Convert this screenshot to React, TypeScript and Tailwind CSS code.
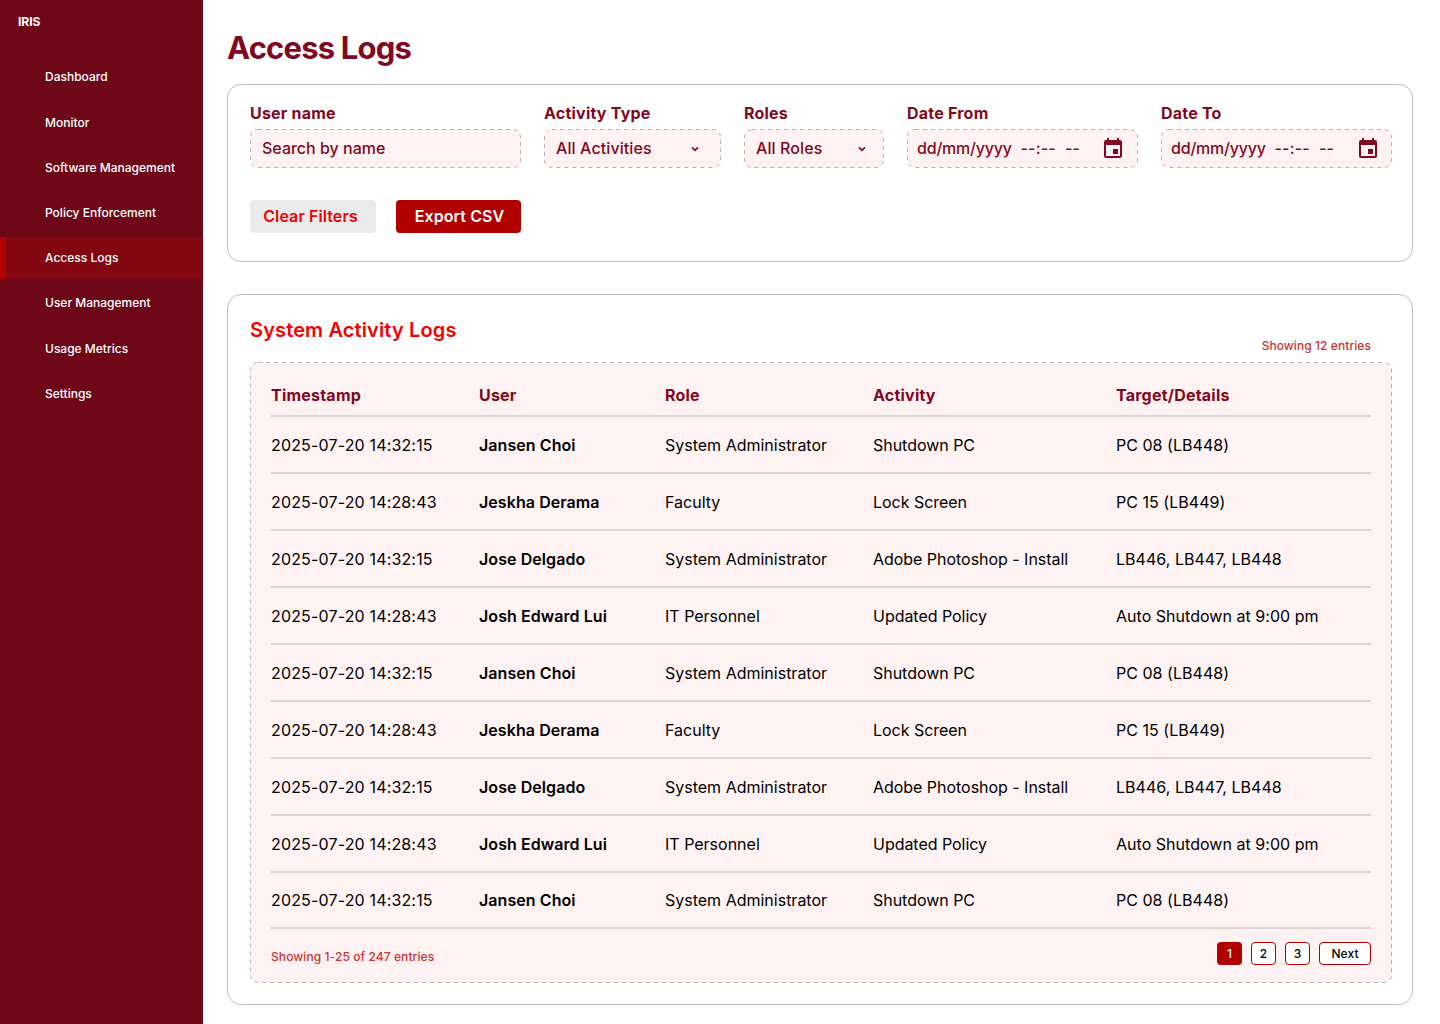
import React from 'react';

const navItems = ['Dashboard', 'Monitor', 'Software Management', 'Policy Enforcement', 'Access Logs', 'User Management', 'Usage Metrics', 'Settings'];

const jansen = ['2025-07-20 14:32:15', 'Jansen Choi', 'System Administrator', 'Shutdown PC', 'PC 08 (LB448)'];
const jeskha = ['2025-07-20 14:28:43', 'Jeskha Derama', 'Faculty', 'Lock Screen', 'PC 15 (LB449)'];
const jose = ['2025-07-20 14:32:15', 'Jose Delgado', 'System Administrator', 'Adobe Photoshop - Install', 'LB446, LB447, LB448'];
const josh = ['2025-07-20 14:28:43', 'Josh Edward Lui', 'IT Personnel', 'Updated Policy', 'Auto Shutdown at 9:00 pm'];
const rows = [jansen, jeskha, jose, josh, jansen, jeskha, jose, josh, jansen];

const columns = 'grid grid-cols-[208px_186px_208px_243px_1fr] items-center border-b-2 border-[#ded2d3]';

const cellStyles = ['tracking-[0.16px]', 'font-semibold tracking-[0.07px]', '', 'tracking-[-0.03px]', 'tracking-[0.03px]'];

function Chevron() {
  return (
    <svg width="8" height="6" viewBox="0 0 8 6" fill="none" stroke="#800820" strokeWidth="1.7">
      <path d="M1 1.400 4 4.400 7 1.400" />
    </svg>
  );
}

function CalendarIcon() {
  return (
    <svg width="24" height="24" viewBox="0 0 24 24" fill="#800820">
      <path d="M17 12h-5v5h5v-5zM16 1v2H8V1H6v2H5c-1.110 0-1.990.9-1.990 2L3 19c0 1.100.89 2 2 2h14c1.100 0 2-.9 2-2V5c0-1.100-.9-2-2-2h-1V1h-2zm3 18H5V8h14v11z" />
    </svg>
  );
}

/* Even 4px dashes around a rounded box. */
function DashedOutline({ width, height }: { width: number; height: number }) {
  return (
    <svg aria-hidden="true" className="pointer-events-none absolute inset-0" width={width} height={height} fill="none">
      <rect x="0.5" y="0.5" width={width - 1} height={height - 1} rx="7.5" stroke="#bdb2b3" strokeDasharray="4 4" />
    </svg>
  );
}

function Field({ label, width, px, children }: { label: string; width: string; px: number; children: React.ReactNode }) {
  return (
    <div className={`shrink-0 ${width}`}>
      <div className="h-6 text-base leading-6 font-bold tracking-[0.22px]">{label}</div>
      <div className="relative mt-1 flex h-[39px] items-center rounded-[8px] bg-[#fff2f2] text-base font-medium whitespace-pre">
        {children}
        <DashedOutline width={px} height={39} />
      </div>
    </div>
  );
}

function DateField({ label, iconOffset }: { label: string; iconOffset: string }) {
  return (
    <Field label={label} width="w-[231px]" px={231}>
      <span className="ml-[10px] w-[103.5px] pb-0.5 tracking-[-0.2px]">dd/mm/yyyy</span>
      <span className="w-[44.5px] pb-0.5 tracking-[0.2px]">--:--</span>
      <span className={`pb-0.5 ${iconOffset}`}>--</span>
      <CalendarIcon />
    </Field>
  );
}

export default function App() {
  return (
    <div className="flex h-[1024px] w-[1440px] overflow-hidden bg-white font-['Inter',sans-serif] text-[#800820]">
      <aside className="w-[203px] shrink-0 bg-[#6e0819] text-white">
        <div className="h-14 pt-[13px] pl-[18px] text-xs leading-[18px] font-bold">IRIS</div>
        <nav className="flex flex-col gap-[3.25px] text-xs font-medium">
          {navItems.map((item) => (
            <a
              key={item}
              className={
                item === 'Access Logs'
                  ? 'flex h-[42px] items-center border-l-[6px] border-[#b00000] bg-[#820711] pl-[39px]'
                  : item === 'Monitor'
                    ? 'flex h-[42px] items-center pt-0.5 pl-[45px]'
                    : 'flex h-[42px] items-center pl-[45px]'
              }
            >
              {item}
            </a>
          ))}
        </nav>
      </aside>

      <main className="ml-6 w-[1186px]">
        <h1 className="mt-7 h-10 text-[31px] leading-10 font-bold tracking-[-0.8px]">Access Logs</h1>

        <section className="mt-4 h-[178px] rounded-[14px] border border-[#bdbdbd] px-[22px] pt-4">
          <div className="flex gap-[23px]">
            <Field label="User name" width="w-[271px]" px={271}>
              <span className="ml-3 pb-0.5">Search by name</span>
            </Field>
            <Field label="Activity Type" width="w-[177px]" px={177}>
              <span className="ml-3 w-[135px] pb-0.5 tracking-[0.1px]">All Activities</span>
              <Chevron />
            </Field>
            <Field label="Roles" width="w-[140px]" px={140}>
              <span className="ml-3 w-[102px] pb-0.5 tracking-[0.1px]">All Roles</span>
              <Chevron />
            </Field>
            <DateField label="Date From" iconOffset="w-[36px]" />
            <DateField label="Date To" iconOffset="w-[37px]" />
          </div>
          <div className="mt-8 flex gap-5 text-base font-semibold tracking-[0.1px]">
            <button className="h-[33px] w-[126px] rounded-[4px] bg-[#ebebeb] pr-[5px] pb-0.5 text-[#f00000]">Clear Filters</button>
            <button className="h-[33px] w-[125px] rounded-[4px] bg-[#b00000] pb-0.5 pl-0.5 text-white">Export CSV</button>
          </div>
        </section>

        <section className="mt-8 h-[711px] rounded-[14px] border border-[#bdbdbd] px-[22px]">
          <div className="flex h-[67px] justify-between">
            <h2 className="pt-[21px] text-xl leading-7 font-semibold tracking-[0.13px] text-[#f50000]">System Activity Logs</h2>
            <span className="pt-[43px] pr-[19px] text-xs leading-4 font-medium tracking-[0.07px] text-[#cc3333]">Showing 12 entries</span>
          </div>
          <div className="relative h-[621px] w-[1142px] rounded-[8px] bg-[#fff2f2] px-[21px] pt-px">
            <DashedOutline width={1142} height={621} />
            <div className={`${columns} h-[54px] pt-[11px] text-base font-bold tracking-[0.22px]`}>
              <span>Timestamp</span>
              <span>User</span>
              <span>Role</span>
              <span>Activity</span>
              <span>Target/Details</span>
            </div>
            {rows.map((row, i) => (
              <div key={i} className={`${columns} ${i === 8 ? 'h-14' : 'h-[57px]'} text-base text-black`}>
                {row.map((cell, j) => (
                  <span key={j} className={cellStyles[j]}>{cell}</span>
                ))}
              </div>
            ))}
            <div className="flex justify-between pt-[13px] text-xs font-medium">
              <span className="pt-[7px] leading-4 tracking-[0.09px] text-[#cc3333]">Showing 1-25 of 247 entries</span>
              <div className="flex gap-[9px] text-black">
                <button className="h-[23px] w-[25px] rounded-[4px] bg-[#b00000] text-white">1</button>
                <button className="h-[23px] w-[25px] rounded-[4px] border border-[#b00000] bg-white">2</button>
                <button className="h-[23px] w-[25px] rounded-[4px] border border-[#b00000] bg-white">3</button>
                <button className="h-[23px] w-[52px] rounded-[4px] border border-[#b00000] bg-white tracking-[0.1px]">Next</button>
              </div>
            </div>
          </div>
        </section>
      </main>
    </div>
  );
}
